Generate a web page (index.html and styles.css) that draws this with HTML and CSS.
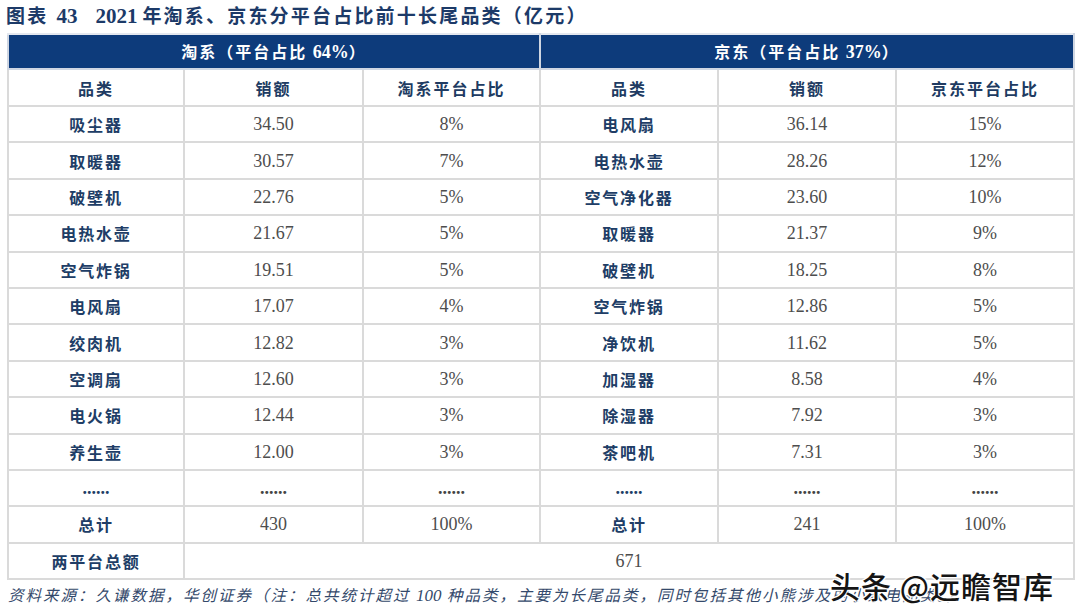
FILE: index.html
```html
<!DOCTYPE html>
<html lang="zh">
<head>
<meta charset="utf-8">
<link rel="stylesheet" href="styles.css">
</head>
<body>
<div class="page">
  <h1 class="title"><span class="t-cn">图表</span><span class="t-num">43</span><span class="t-num t-year">2021</span><span class="t-cn">年淘系、京东分平台占比前十长尾品类（亿元）</span></h1>
  <table class="data">
    <colgroup>
      <col class="c1"><col class="c2"><col class="c3"><col class="c4"><col class="c5"><col class="c6">
    </colgroup>
    <thead>
      <tr class="band">
        <th colspan="3">淘系（平台占比 <span class="num">64%</span>）</th>
        <th colspan="3">京东（平台占比 <span class="num">37%</span>）</th>
      </tr>
      <tr class="heads">
        <th>品类</th><th>销额</th><th>淘系平台占比</th>
        <th>品类</th><th>销额</th><th>京东平台占比</th>
      </tr>
    </thead>
    <tbody>
      <tr><td class="cn">吸尘器</td><td class="num">34.50</td><td class="num">8%</td><td class="cn">电风扇</td><td class="num">36.14</td><td class="num">15%</td></tr>
      <tr><td class="cn">取暖器</td><td class="num">30.57</td><td class="num">7%</td><td class="cn">电热水壶</td><td class="num">28.26</td><td class="num">12%</td></tr>
      <tr><td class="cn">破壁机</td><td class="num">22.76</td><td class="num">5%</td><td class="cn">空气净化器</td><td class="num">23.60</td><td class="num">10%</td></tr>
      <tr><td class="cn">电热水壶</td><td class="num">21.67</td><td class="num">5%</td><td class="cn">取暖器</td><td class="num">21.37</td><td class="num">9%</td></tr>
      <tr><td class="cn">空气炸锅</td><td class="num">19.51</td><td class="num">5%</td><td class="cn">破壁机</td><td class="num">18.25</td><td class="num">8%</td></tr>
      <tr><td class="cn">电风扇</td><td class="num">17.07</td><td class="num">4%</td><td class="cn">空气炸锅</td><td class="num">12.86</td><td class="num">5%</td></tr>
      <tr><td class="cn">绞肉机</td><td class="num">12.82</td><td class="num">3%</td><td class="cn">净饮机</td><td class="num">11.62</td><td class="num">5%</td></tr>
      <tr><td class="cn">空调扇</td><td class="num">12.60</td><td class="num">3%</td><td class="cn">加湿器</td><td class="num">8.58</td><td class="num">4%</td></tr>
      <tr><td class="cn">电火锅</td><td class="num">12.44</td><td class="num">3%</td><td class="cn">除湿器</td><td class="num">7.92</td><td class="num">3%</td></tr>
      <tr><td class="cn">养生壶</td><td class="num">12.00</td><td class="num">3%</td><td class="cn">茶吧机</td><td class="num">7.31</td><td class="num">3%</td></tr>
      <tr class="dots"><td class="navy">......</td><td>......</td><td>......</td><td class="navy">......</td><td>......</td><td>......</td></tr>
      <tr><td class="cn">总计</td><td class="num">430</td><td class="num">100%</td><td class="cn">总计</td><td class="num">241</td><td class="num">100%</td></tr>
      <tr><td class="cn">两平台总额</td><td class="num" colspan="5">671</td></tr>
    </tbody>
  </table>
  <p class="source">资料来源：久谦数据，华创证券（注：总共统计超过 <span class="src-num">100</span> 种品类，主要为长尾品类，同时包括其他小熊涉及的小家电品类。）</p>
  <div class="watermark">头条 @远瞻智库</div>
</div>
</body>
</html>
```
FILE: styles.css
```css
html, body {
  margin: 0;
  padding: 0;
  background: #ffffff;
}

.page {
  position: relative;
  width: 1080px;
  height: 613px;
  overflow: hidden;
  padding: 0 7px;
  box-sizing: border-box;
  font-family: "Noto Sans CJK SC", "Noto Sans", sans-serif;
}

.title {
  margin: 0;
  padding-top: 3px;
  height: 30px;
  display: flex;
  align-items: baseline;
  font-size: 19px;
  font-weight: 700;
  color: #1c3a68;
  line-height: 24px;
  white-space: nowrap;
}

.title .t-cn {
  letter-spacing: 2.2px;
  margin-left: -1px;
}

.title .t-num {
  font-family: "Liberation Serif", serif;
  font-size: 21px;
  margin: 0 15px 0 8px;
}

.title .t-year {
  margin: 0 6px 0 3px;
}

.data {
  width: 1066px;
  border-collapse: collapse;
  table-layout: fixed;
}

.data col.c1 { width: 176px; }
.data col.c2 { width: 179px; }
.data col.c3 { width: 177px; }
.data col.c4 { width: 178px; }
.data col.c5 { width: 178px; }
.data col.c6 { width: 178px; }

.data th,
.data td {
  border: 2px solid #dadada;
  text-align: center;
  vertical-align: middle;
  padding: 0;
  height: 34.4px;
  line-height: 20px;
}

.band th {
  background: #0d3b7b;
  color: #ffffff;
  height: 33px;
  font-size: 16px;
  font-weight: 700;
  letter-spacing: 2px;
  border-color: #cfd6e2;
  border-top-color: #e4e8ef;
}

.band th .num {
  font-family: "Liberation Serif", serif;
  font-size: 18px;
  letter-spacing: 0;
  color: #ffffff;
}

.heads th {
  font-size: 16px;
  font-weight: 700;
  color: #203b62;
  letter-spacing: 2px;
  height: 35px;
}

td.cn {
  font-size: 16px;
  font-weight: 700;
  color: #203d66;
  letter-spacing: 1.8px;
}

td.num {
  font-family: "Liberation Serif", serif;
  font-size: 18px;
  color: #4d4d4d;
}

.dots td {
  font-family: "Liberation Serif", serif;
  font-size: 18px;
  font-weight: 700;
  letter-spacing: 0;
  color: #444444;
  line-height: 14px;
}

.dots td.navy {
  color: #203d66;
}

.source {
  margin: 3px 0 0 1px;
  font-size: 15.5px;
  font-style: italic;
  letter-spacing: 2px;
  color: #34496b;
  line-height: 22px;
  white-space: nowrap;
}

.source .src-num {
  font-family: "Liberation Serif", serif;
  font-size: 17px;
  letter-spacing: 0;
}

.watermark {
  position: absolute;
  left: 830px;
  top: 565px;
  font-family: "Noto Sans CJK SC", sans-serif;
  font-size: 30px;
  line-height: 40px;
  font-weight: 500;
  color: #151515;
  white-space: nowrap;
  letter-spacing: 1px;
  text-shadow: 1px 1px 0 #fff, -1px -1px 0 #fff, 1px -1px 0 #fff, -1px 1px 0 #fff, 0 0 3px #fff;
}
```
